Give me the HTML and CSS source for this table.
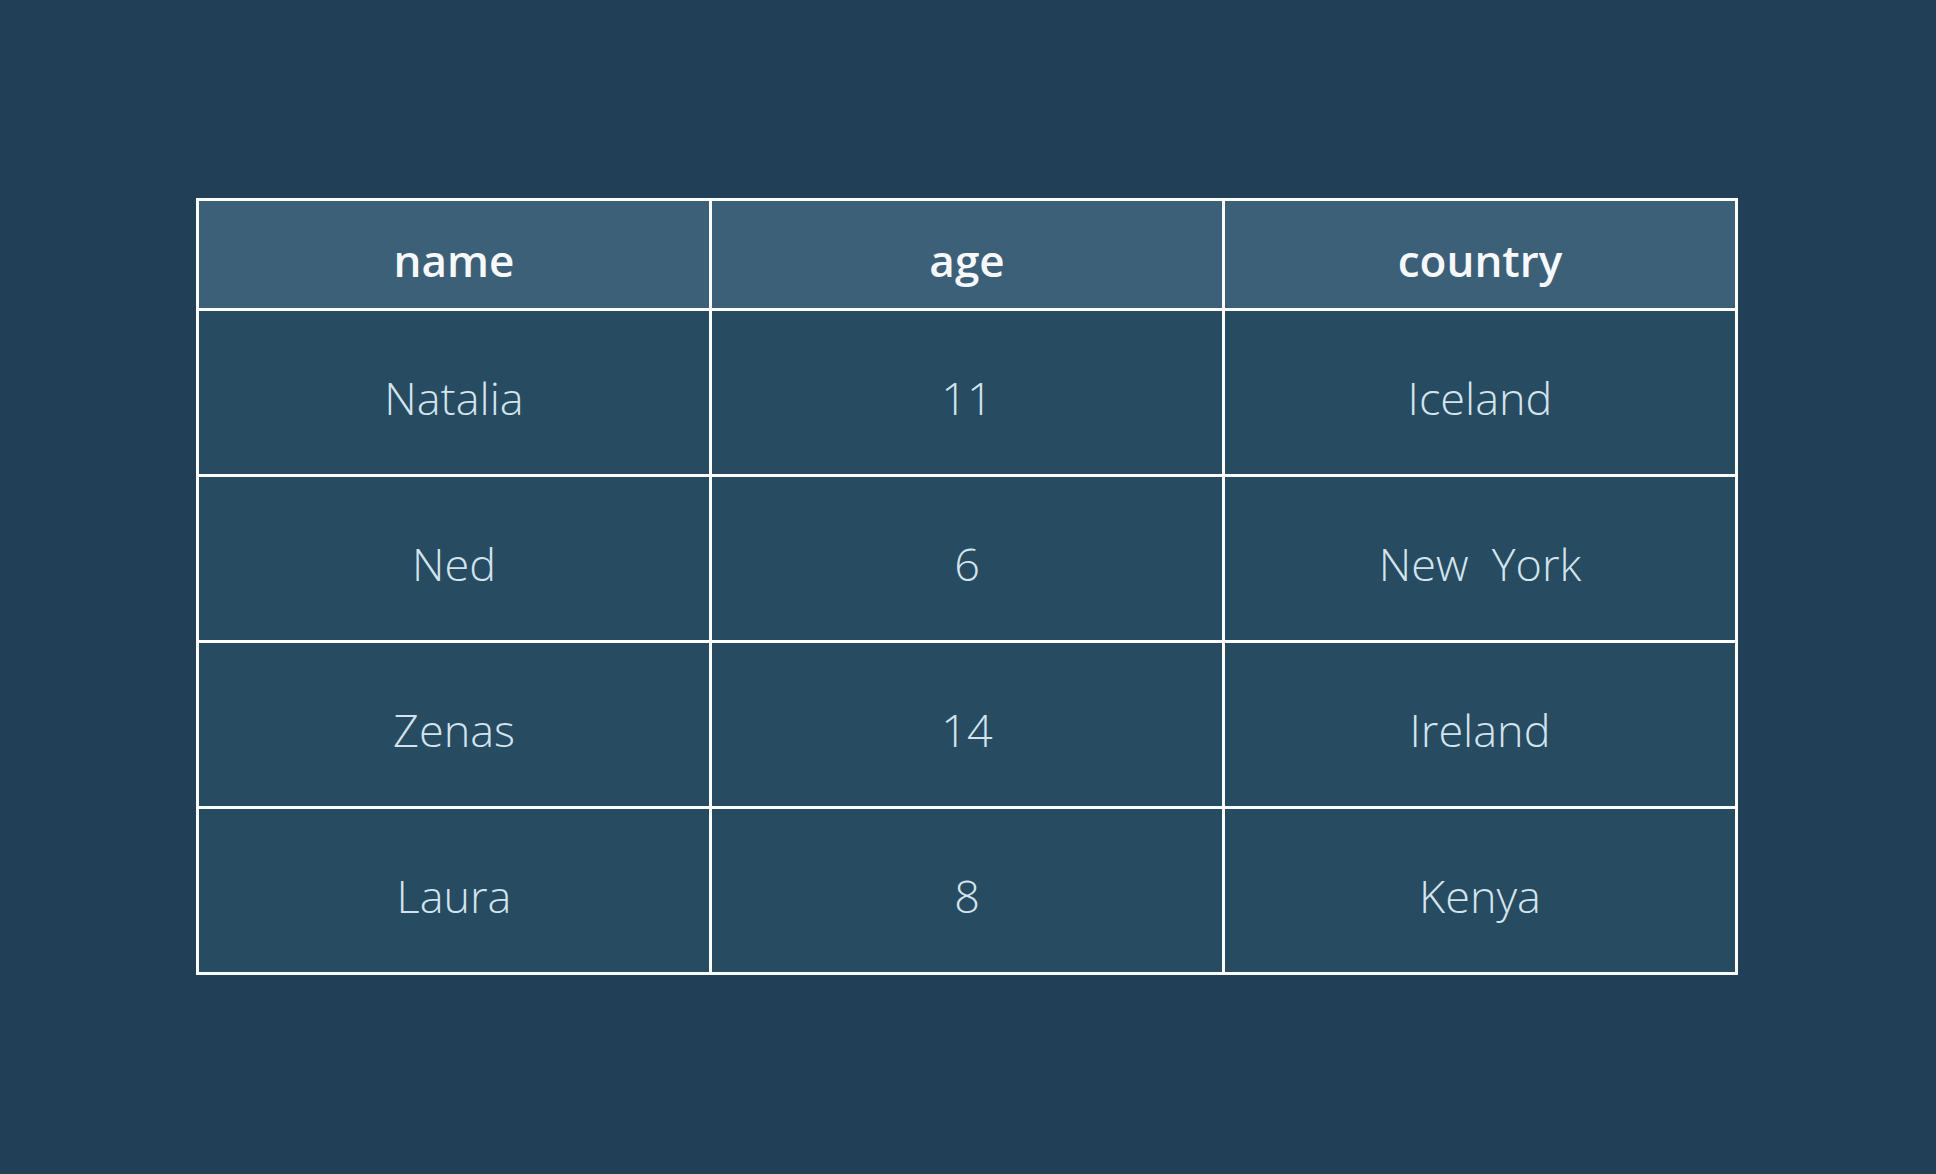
FILE: index.html
```html
<!DOCTYPE html>
<html lang="en">
<head>
<meta charset="utf-8">
<title>Table</title>
<link rel="stylesheet" href="styles.css">
</head>
<body>
<main class="stage">
  <table class="data">
    <colgroup><col><col><col></colgroup>
    <thead>
      <tr><th>name</th><th>age</th><th>country</th></tr>
    </thead>
    <tbody>
      <tr><td>Natalia</td><td>11</td><td>Iceland</td></tr>
      <tr><td>Ned</td><td>6</td><td>New&nbsp; York</td></tr>
      <tr><td>Zenas</td><td>14</td><td>Ireland</td></tr>
      <tr><td>Laura</td><td>8</td><td>Kenya</td></tr>
    </tbody>
  </table>
</main>
</body>
</html>
```
FILE: styles.css
```css
html, body {
  margin: 0;
  padding: 0;
  background: #213f56;
  height: 100%;
}
.stage {
  padding: 198px 0 0 196px;
  box-sizing: border-box;
  min-height: 100vh;
}
.data {
  width: 1542px;
  border-collapse: collapse;
  table-layout: fixed;
  font-family: "Open Sans", "Segoe UI", sans-serif;
  text-align: center;
}
.data th,
.data td {
  border: 3px solid #fbfdfe;
  padding: 10px 0 0 0;
  vertical-align: middle;
}
.data th {
  height: 97px;
  background: #3d6079;
  color: #f6f8fa;
  font-size: 44px;
  font-weight: 600;
}
.data td {
  height: 153px;
  background: #274b61;
  color: #d3e4ee;
  font-size: 45px;
  font-weight: 300;
}
```
